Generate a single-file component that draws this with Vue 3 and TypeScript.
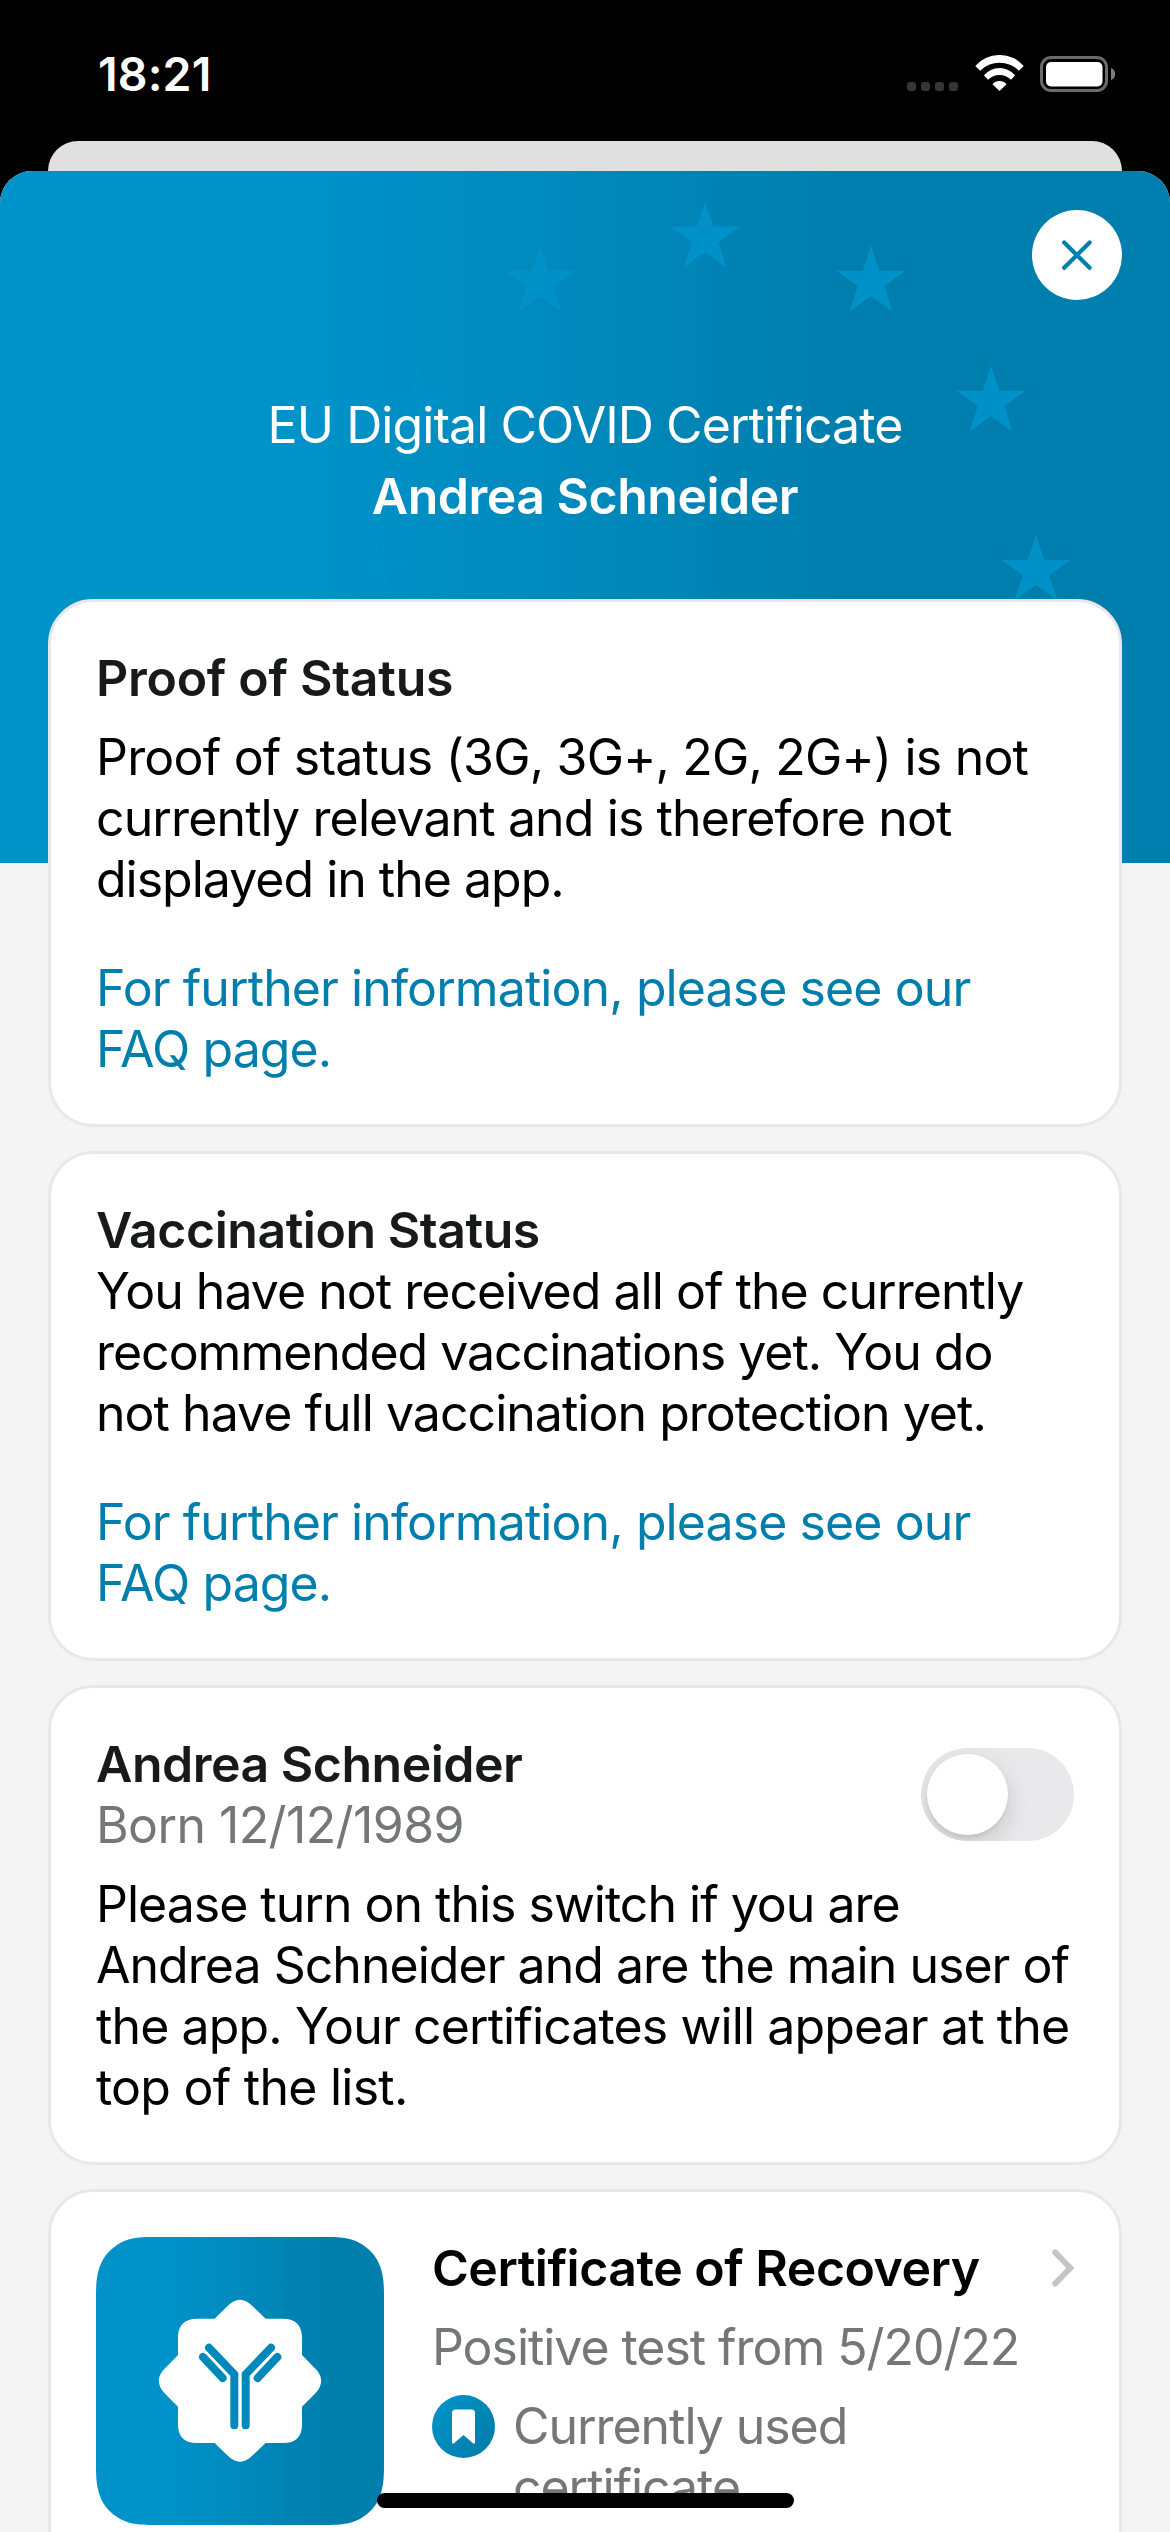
<script setup lang="ts">
interface Line {
  text: string
  /** letter spacing in px */
  tracking: number
}

interface InfoCard {
  title: Line
  spaced: boolean
  body: Line[]
  link: Line[]
}

interface Point {
  x: number
  y: number
}

const faqLink: Line[] = [
  { text: 'For further information, please see our', tracking: -0.91 },
  { text: 'FAQ page.', tracking: -0.9 },
]

const infoCards: InfoCard[] = [
  {
    title: { text: 'Proof of Status', tracking: -0.27 },
    spaced: true,
    body: [
      { text: 'Proof of status (3G, 3G+, 2G, 2G+) is not', tracking: -0.8 },
      { text: 'currently relevant and is therefore not', tracking: -0.88 },
      { text: 'displayed in the app.', tracking: -1 },
    ],
    link: faqLink,
  },
  {
    title: { text: 'Vaccination Status', tracking: -0.46 },
    spaced: false,
    body: [
      { text: 'You have not received all of the currently', tracking: -0.97 },
      { text: 'recommended vaccinations yet. You do', tracking: -1.02 },
      { text: 'not have full vaccination protection yet.', tracking: -0.97 },
    ],
    link: faqLink,
  },
]

const switchText: Line[] = [
  { text: 'Please turn on this switch if you are', tracking: -1 },
  { text: 'Andrea Schneider and are the main user of', tracking: -0.97 },
  { text: 'the app. Your certificates will appear at the', tracking: -0.89 },
  { text: 'top of the list.', tracking: -0.75 },
]

const starCenters: Point[] = [
  { x: 373, y: 400 },
  { x: 419, y: 232 },
  { x: 540, y: 111 },
  { x: 705, y: 67 },
  { x: 871, y: 111 },
  { x: 991, y: 231 },
  { x: 1036, y: 400 },
]

function track(line: Line): { letterSpacing: string } {
  return { letterSpacing: `${line.tracking}px` }
}

function starPoints(center: Point): string {
  const outer = 36.5
  const inner = outer * 0.382
  return Array.from({ length: 10 }, (_, i) => {
    const r = i % 2 === 0 ? outer : inner
    const a = (Math.PI / 5) * i - Math.PI / 2
    return `${(center.x + r * Math.cos(a)).toFixed(2)},${(center.y + r * Math.sin(a)).toFixed(2)}`
  }).join(' ')
}
</script>

<template>
  <div class="screen">
    <div class="status-bar">
      <span class="time">18:21</span>
      <div class="indicators">
        <div class="cell-dots"><i v-for="n in 4" :key="n"></i></div>
        <svg class="wifi" width="49" height="36" viewBox="0 0 48.4 36">
          <path
            fill="#fff"
            d="M0 11A32.1 32.1 0 0 1 48.4 11L43.6 15.7A27.5 27.5 0 0 0 4.8 15.7ZM8.6 20.3A20.3 20.3 0 0 1 39.8 20.3L35.7 24.7A16.4 16.4 0 0 0 12.7 24.7ZM17.2 29.3A9.1 9.1 0 0 1 31.2 29.3L24.2 36Z"
          />
        </svg>
        <svg class="battery" width="76" height="36" viewBox="0 0 76 36">
          <rect x="1.5" y="1.5" width="65" height="33" rx="9.5" fill="none" stroke="#6b6b6b" stroke-width="3" />
          <rect x="6" y="6" width="56.5" height="24.5" rx="5" fill="#fff" />
          <path d="M71 12A6.4 6.4 0 0 1 71 24Z" fill="#7d7d7d" />
        </svg>
      </div>
    </div>

    <div class="back-sheet"></div>

    <main class="sheet">
      <svg class="stars" width="1170" height="692" viewBox="0 0 1170 692">
        <defs>
          <linearGradient id="sky" x1="0" x2="1">
            <stop offset="0.24" stop-color="#0093ca" />
            <stop offset="0.72" stop-color="#007fae" />
          </linearGradient>
        </defs>
        <rect width="1170" height="692" fill="url(#sky)" />
        <polygon v-for="(c, i) in starCenters" :key="i" :points="starPoints(c)" fill="#0091c8" />
      </svg>

      <button class="close" type="button" aria-label="Close">
        <svg width="30" height="30" viewBox="0 0 30 30">
          <path d="M2.2 2.4L27.6 27.8M27.6 2.4L2.2 27.8" stroke="#007fad" stroke-width="4.2" stroke-linecap="round" />
        </svg>
      </button>

      <header class="heading">
        <div class="text">EU Digital COVID Certificate</div>
        <div class="title">Andrea Schneider</div>
      </header>

      <div class="cards">
        <section v-for="card in infoCards" :key="card.title.text" class="card">
          <h2 class="title" :style="track(card.title)">{{ card.title.text }}</h2>
          <p class="text" :class="{ spaced: card.spaced }">
            <span v-for="line in card.body" :key="line.text" :style="track(line)">{{ line.text }}</span>
          </p>
          <a class="text link">
            <span v-for="line in card.link" :key="line.text" :style="track(line)">{{ line.text }}</span>
          </a>
        </section>

        <section class="card">
          <div class="person">
            <div>
              <h2 class="title">Andrea Schneider</h2>
              <p class="text muted born">Born 12/12/1989</p>
            </div>
            <div class="switch" role="switch" aria-checked="false"><span class="knob"></span></div>
          </div>
          <p class="text spaced">
            <span v-for="line in switchText" :key="line.text" :style="track(line)">{{ line.text }}</span>
          </p>
        </section>

        <section class="card certificate">
          <svg class="tile" width="288" height="288" viewBox="108 231 864 864">
            <defs>
              <linearGradient id="tile" x1="0" x2="1">
                <stop offset="0.26" stop-color="#0092c9" />
                <stop offset="0.8" stop-color="#007fad" />
              </linearGradient>
            </defs>
            <path
              fill="url(#tile)"
              d="M278 231H802C860 231 884 238 912 257C936 273 955 297 964 330C970 352 972 372 972 408V918C972 954 970 974 964 996C955 1029 936 1053 912 1069C884 1088 860 1095 802 1095H278C220 1095 196 1088 168 1069C144 1053 125 1029 116 996C110 974 108 954 108 918V408C108 372 110 352 116 330C125 297 144 273 168 257C196 238 220 231 278 231Z"
            />
            <path
              fill="#fff"
              d="M464 476L502 439C526 413 554 413 578 439L617 476H670C706 476 726 496 726 532V585L764 624C790 648 790 676 764 702L726 740V794C726 830 706 849 670 849H617L578 886C554 912 526 912 502 886L464 849H411C374 849 354 830 354 794V740L316 702C290 676 290 648 316 624L354 585V532C354 496 374 476 411 476Z"
            />
            <g fill="none" stroke="#0088ba" stroke-width="24" stroke-linecap="round">
              <path d="M447 563L523 643V796M633 563L557 643V796M429 591L488 654M652 591L593 654" />
            </g>
          </svg>
          <div class="details">
            <div class="details-head">
              <h2 class="title black">Certificate of Recovery</h2>
              <svg class="chevron" width="22" height="38" viewBox="0 0 22 38">
                <path d="M3.2 3.5L18.4 19L3.2 34.5" fill="none" stroke="#c5c5c7" stroke-width="6" stroke-linecap="round" />
              </svg>
            </div>
            <p class="text muted spaced">Positive test from 5/20/22</p>
            <div class="used">
              <svg class="bookmark" width="63" height="63" viewBox="0 0 63 63">
                <defs>
                  <linearGradient id="mark" x1="0" y1="0.1" x2="1" y2="0.9">
                    <stop offset="0.1" stop-color="#0091c7" />
                    <stop offset="0.85" stop-color="#007fad" />
                  </linearGradient>
                </defs>
                <circle cx="31.5" cy="31.5" r="31.5" fill="url(#mark)" />
                <path
                  fill="#fff"
                  d="M23.5 14.5H39.5Q43 14.5 43 18V47.5Q42.6 49.3 41 48.3L31.5 40L22 48.3Q20.4 49.3 20 47.5V18Q20 14.5 23.5 14.5Z"
                />
              </svg>
              <p class="text muted"><span>Currently used</span><span>certificate</span></p>
            </div>
          </div>
        </section>
      </div>
    </main>

    <div class="home-indicator"></div>
  </div>
</template>

<style>
html,
body {
  margin: 0;
  background: #000;
}
</style>

<style scoped>
.screen {
  position: relative;
  display: flex;
  flex-direction: column;
  width: 1170px;
  height: 2532px;
  overflow: hidden;
  background: #000;
  font-family: Inter, 'Liberation Sans', sans-serif;
  color: #000;
}

.status-bar {
  display: flex;
  justify-content: space-between;
  box-sizing: border-box;
  height: 141px;
  padding: 46px 54px 0 98px;
}

.time {
  font-size: 46.5px;
  line-height: 56px;
  font-weight: 600;
  letter-spacing: 0.1px;
  color: #fff;
}

.indicators {
  display: flex;
  align-items: flex-start;
  padding-top: 9px;
}

.cell-dots {
  display: flex;
  gap: 5px;
  margin: 27px 17px 0 0;
}

.cell-dots i {
  width: 9px;
  height: 9px;
  border-radius: 3px;
  background: #343636;
}

.wifi {
  margin-right: 16px;
}

.battery {
  margin-top: 1px;
}

.back-sheet {
  flex: none;
  height: 30px;
  margin: 0 48px;
  border-radius: 30px 30px 0 0;
  background: #e0e0e0;
}

.sheet {
  position: relative;
  flex: 1;
  min-height: 0;
  overflow: hidden;
  border-radius: 32px 32px 0 0;
  background: #f4f4f4;
}

.stars {
  position: absolute;
  top: 0;
  left: 0;
}

.close {
  position: absolute;
  top: 39px;
  right: 48px;
  display: flex;
  align-items: center;
  justify-content: center;
  width: 90px;
  height: 90px;
  padding: 0;
  border: 0;
  border-radius: 50%;
  background: #fff;
}

.heading {
  position: relative;
  display: flex;
  flex-direction: column;
  align-items: center;
  gap: 10px;
  padding: 224px 0 72px;
  color: #fff;
}

.heading .title {
  color: #fff;
}

.cards {
  position: relative;
  display: flex;
  flex-direction: column;
  gap: 24px;
  padding: 0 48px;
}

.card {
  box-sizing: border-box;
  padding: 46px 45px 44px;
  border: 3px solid #e8e8e8;
  border-radius: 45px;
  background: #fff;
}

.title,
.text {
  margin: 0;
  font-size: 50px;
  line-height: 61px;
  white-space: nowrap;
}

.title {
  font-weight: 600;
  letter-spacing: -0.5px;
  color: #18191b;
}

.title.black {
  color: #000;
}

.text {
  display: block;
  font-weight: 400;
  letter-spacing: -1.05px;
}

.heading .text {
  letter-spacing: -0.93px;
}

.text.born {
  letter-spacing: -0.6px;
}

.text span {
  display: block;
}

.text.spaced {
  margin-top: 18px;
}

.muted {
  color: #747678;
}

.link {
  margin-top: 48px;
  color: #007fad;
}

.person {
  display: flex;
  justify-content: space-between;
  align-items: flex-start;
}

.switch {
  box-sizing: border-box;
  width: 153px;
  height: 93px;
  margin-top: 14px;
  padding: 6px;
  overflow: hidden;
  border-radius: 47px;
  background: #e9e9eb;
}

.knob {
  display: block;
  width: 81px;
  height: 81px;
  border-radius: 50%;
  background: #fff;
  box-shadow: 0 9px 24px rgba(0, 0, 0, 0.15), 0 3px 3px rgba(0, 0, 0, 0.06);
}

.certificate {
  display: flex;
  gap: 48px;
  height: 420px;
}

.tile {
  flex: none;
  margin-top: -1px;
}

.details {
  flex: 1;
}

.details-head {
  display: flex;
  justify-content: space-between;
}

.chevron {
  margin-top: 11px;
}

.used {
  display: flex;
  align-items: flex-start;
  gap: 18px;
  margin-top: 18px;
}

.bookmark {
  margin-top: -1px;
}

.home-indicator {
  position: absolute;
  left: 377px;
  bottom: 24px;
  width: 417px;
  height: 15px;
  border-radius: 8px;
  background: #000;
}
</style>
